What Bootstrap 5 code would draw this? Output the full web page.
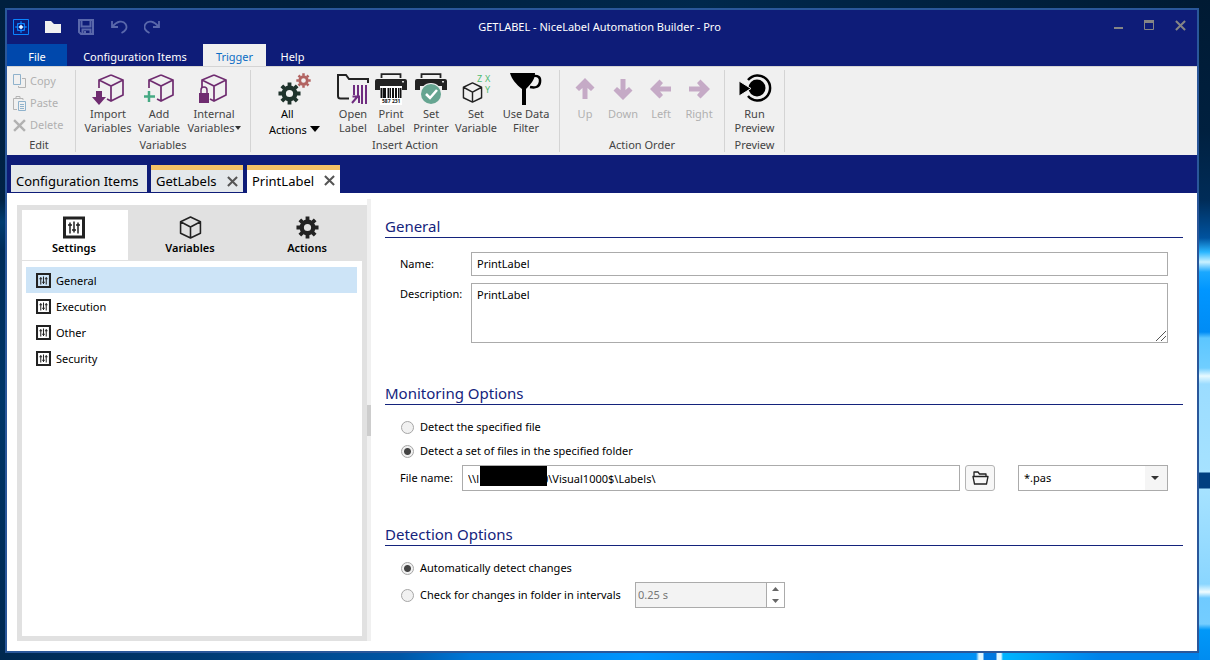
<!DOCTYPE html>
<html lang="en">
<head>
<meta charset="utf-8">
<meta name="viewport" content="width=device-width, initial-scale=1">
<title>GETLABEL - NiceLabel Automation Builder - Pro</title>
<link href="https://cdn.jsdelivr.net/npm/bootstrap@5.3.0/dist/css/bootstrap.min.css" rel="stylesheet">
<style>
:root{--navy:#0e1c78;--line:#ababab;--plum:#6f2c70}
body{font-family:"Noto Sans","Open Sans",sans-serif;font-size:11px;line-height:14px;color:#000;min-height:100vh;padding:8px 11px 7px 5px;
 background:
 linear-gradient(180deg,#001a33 0,#00203f 130px,#002c58 200px,#00539f 238px,#29b6ff 252px,#c9f1ff 262px,#1aa8ff 272px,#0096ff 290px,#008cf5 332px,#5cc6ff 338px,#70ceff 368px,#e8faff 376px,#9bdcff 384px,#a6e2ff 472px,#003f80 473px,#003f80 488px,#a6e2ff 489px,#8ad6ff 584px,#f0fcff 592px,#6fcaff 598px,#74cdff 624px,#0098f8 630px,#008cf0 660px) right top/11px 100% no-repeat,
 linear-gradient(90deg,#002850 0,#003a72 200px,#0056a6 400px,#0078d8 470px,#0096ff 640px,#0078e0 820px,#0090f5 976px,#dff6ff 979px,#dff6ff 983px,#0078e0 984px,#0078e0 996px,#dff6ff 997px,#dff6ff 1001px,#00b4ff 1003px,#0082ea 1100px) left bottom/100% 7px no-repeat,
 linear-gradient(90deg,#00203f 0,#001f3c 300px,#00284c 700px,#001a33 1210px) left top/100% 8px no-repeat,
 linear-gradient(180deg,#00203f 0,#002245 200px,#003c70 222px,#002c58 250px,#003668 400px,#002850 660px)}
button,input,select,textarea{font:inherit;color:inherit}
button{background:none;border:0;padding:0}
svg{display:block;flex:none}
.app-window{border:2px solid #2a579a;background:#fff;min-height:calc(100vh - 15px)}
.title-bar{background:var(--navy);color:#fff;height:34px;display:grid;grid-template-columns:1fr auto 1fr;align-items:center;padding:0 11px 0 6px}
.menu-bar{background:var(--navy);height:22px}
.menu-bar button{color:#fff;padding-top:4px;height:22px}
.menu-bar .file-tab{background:#0048ac;width:60px}
.menu-bar .wide-tab{width:136px}
.menu-bar .on-tab{background:#f0f0f0;color:#0b6cc4;width:63px}
.menu-bar .help-tab{width:53px}
.ribbon{background:#f0f0f0;height:89px;color:#444;padding-top:3px;border-top:1px solid #d4d4d4}
.rb-group{height:82px;border-right:1px solid #d4d4d4;padding-top:3px}
.rb-grid{display:grid;height:65px;align-items:start}
.rb-grid button{display:flex;flex-direction:column;align-items:center;line-height:14px;white-space:nowrap}
.rb-grid svg{margin-bottom:2px}
.rb-title{text-align:center;line-height:14px}
.g-edit{width:69px;padding-top:0}.g-vars{width:175px}.g-ins{width:309px}.g-ord{width:165px}.g-prev{width:60px}
.g-edit .rb-title{padding-right:4px}
.g-vars .rb-grid{grid-template-columns:52px 50px 60px;padding-left:6px}
.g-ins .rb-grid{grid-template-columns:69px 38px 38px 42px 48px 52px;padding-left:14px}
.g-ord .rb-grid{grid-template-columns:repeat(4,38px);padding-left:6px}
.g-prev .rb-grid{justify-content:center}
.rb-grid button:disabled,.edit-list button:disabled{color:#b1b1b1}
.edit-list{height:68px;padding-left:6px}
.edit-list button{display:flex;align-items:center;gap:4px;height:22px}
.caret{display:inline-block;border:3px solid transparent;border-top:4px solid #333;border-bottom:0;vertical-align:2px}
.caret-lg{border-width:5px;border-top:6px solid #000;border-bottom:0}
.doc-bar{background:var(--navy);height:38px;padding:10px 4px 0;gap:4px}
.doc-tab{height:27px;background:#e4e8eb;font-size:13px;padding:5px 5px 0;display:flex;align-items:center;justify-content:space-between;width:92px;border-top:0}
.doc-tab.first{width:136px}
.doc-tab.marked{border-top:5px solid #f4c266;padding-top:0}
.doc-tab.open{background:#fff;height:28px;width:93px;padding-bottom:2px}
.side{width:350px;background:#e1e1e1;padding:5px;margin:12px 0 10px 10px}
.side-tabs{height:51px;display:grid;grid-template-columns:106px 126px 108px}
.side-tabs button{display:flex;flex-direction:column;align-items:center;padding:6px 2px 0 0;gap:2px;font-weight:600;height:50px}
.side-tabs .on{background:#fff}
.side-list{background:#fff;flex:1;padding:6px 5px 6px 4px}
.side-list a{display:flex;align-items:center;height:26px;padding:1px 0 0 10px;gap:5px;color:#000;text-decoration:none}
.side-list .on{background:#cde4f7}
.grip{width:4px;background:#f0f0f0;margin:6px 0 10px}
.grip i{display:block;width:4px;height:31px;background:#cdcdcd}
.pane{padding:23px 14px 20px}
.pane h2{font-size:15px;font-weight:400;line-height:20px;color:#14237c;border-bottom:1px solid #14237c;padding-bottom:1px;margin:0}
.fields{padding:10px 15px 0}
.fields.general{padding:14px 15px 40px}
.fields.monitor{padding-bottom:33px}
.box{border:1px solid var(--line);border-radius:0;background:#fff;padding:0 5px;outline:0;min-width:0;display:block}
.box.h24{height:24px;padding-bottom:2px}
textarea.box{height:60px;padding:4px 5px;resize:none}
.name-col{width:71px}
.file-col{width:62px}
.desc-row{margin-top:7px}
.row-gap{margin-top:2px}
.interval{width:235px}
.sizer{right:2px;bottom:2px}
.radio-row{height:24px;display:flex;align-items:center}
.radio-row label{padding-left:5px}
input[type=radio]{appearance:none;width:13px;height:13px;border:1px solid #a6a6a6;border-radius:50%;background:#f1f1f1;margin:0 1px}
input[type=radio]:checked{background:radial-gradient(circle,#444 0 3px,#f1f1f1 4px)}
.h26{height:26px}
.redact{position:absolute;left:18px;top:1px;width:67px;height:20px;background:#000}
.pick{width:30px;height:26px;border:1px solid #b4b4b4;border-radius:3px;background:#f7f7f7;display:grid;place-items:center;margin:0 23px 0 5px}
.mask{width:150px;appearance:none;background:url("data:image/svg+xml,%3Csvg xmlns='http://www.w3.org/2000/svg' width='22' height='24'%3E%3Cpath fill='%23f5f5f5' d='M0 0h22v24H0z'/%3E%3Cpath fill='%23333' d='M6 10h8l-4 4z'/%3E%3C/svg%3E") right center no-repeat}
.spin{width:150px;border:1px solid var(--line)}
.spin input{width:131px;border:0;border-right:1px solid var(--line);background:#f3f3f3;color:#777;padding:0 2px}
.spin button{height:12px;width:17px;display:grid;place-items:center}
</style>
</head>
<body>
<svg width="0" height="0" class="position-absolute" aria-hidden="true">
 <symbol id="cube" viewBox="0 0 26 28"><path d="M13 1 25 6v15l-12 6-4-2M1 14V6L13 1M1 6l12 6 12-6M13 12v15" fill="none" stroke="currentColor" stroke-width="1.700"/></symbol>
 <symbol id="box" viewBox="0 0 22 22"><path d="M11 1 20.500 5.500v11L11 21l-9.500-4.500v-11zM1.500 5.500 11 10.500l9.500-5M11 10.500V21" fill="none" stroke="currentColor" stroke-width="1.500" stroke-linejoin="round"/></symbol>
 <symbol id="gear" viewBox="-12 -12 24 24"><circle r="6" fill="none" stroke="currentColor" stroke-width="4.500"/><path d="M0-7.500V-11.500M0 7.500V11.500M-7.500 0H-11.500M7.500 0H11.500M5.300-5.300 8-8M-5.300-5.300-8-8M5.300 5.300 8 8M-5.300 5.300-8 8" stroke="currentColor" stroke-width="4"/></symbol>
 <symbol id="sliders" viewBox="0 0 22 22"><path d="M1.500 1.500h19v19h-19z" fill="none" stroke="currentColor" stroke-width="3"/><path d="M7 6v11M11 5v11M15 6v11M5 8.500h4M9 13.500h4M13 8.500h4" fill="none" stroke="currentColor" stroke-width="1.500"/></symbol>
 <symbol id="arrow" viewBox="0 0 20 22"><path d="M10 0 19.500 9.500 16 13l-3.500-3V21h-5V10L4 13 .5 9.500z" fill="currentColor"/></symbol>
 <symbol id="printer" viewBox="0 0 32 32"><path d="M6.500 5V1.200h19V5" fill="none" stroke="#222" stroke-width="1.800"/><path d="M0 17V8q0-2 2-2h28q2 0 2 2v9h-5v-4H5v4z" fill="#222"/><path d="M27 8h2v1.500h-2z" fill="#ddd"/></symbol>
 <symbol id="cross" viewBox="0 0 12 12"><path d="m1 1 10 10M11 1 1 11" fill="none" stroke="currentColor" stroke-width="2.200"/></symbol>
</svg>

<div class="app-window d-flex flex-column">
 <header class="title-bar">
  <div class="d-flex align-items-center">
   <button class="me-3" aria-label="Application menu"><svg width="16" height="16" viewBox="0 0 16 16" fill="none" stroke="#0a84ff"><path d="M.5.5h15v15H.5z"/><path d="M4.500 4.500h7v7h-7zM8 2v12M2 8h12"/><circle cx="8" cy="8" r="4"/><circle cx="8" cy="8" r="1.500" fill="#fff" stroke="#bfe0ff"/></svg></button>
   <button class="me-3" aria-label="Open"><svg width="17" height="12" viewBox="0 0 17 12"><path d="M0 0h6l3 3h7v9H0z" fill="#f0f0f0"/></svg></button>
   <button class="me-3" aria-label="Save"><svg width="17" height="16" viewBox="0 0 17 16" fill="none" stroke="#5a68ab" stroke-width="2"><path d="M1 1h14v14H3l-2-2zM3.500 1v6.500h9V1M4.500 15v-4.500h8V15"/><path d="M7 12v3"/></svg></button>
   <button class="me-3" aria-label="Undo"><svg width="17" height="14" viewBox="0 0 17 14" fill="none" stroke="#5a68ab" stroke-width="1.800"><path d="M1 1v6h6M1.500 6.500C6 1 12 0 14.500 4s0 7-4 9"/></svg></button>
   <button aria-label="Redo"><svg width="17" height="14" viewBox="0 0 17 14" fill="none" stroke="#5a68ab" stroke-width="1.800"><path d="M15 1v6h-6M14.500 6.500C10 1 4 0 1.500 4s0 7 4 9"/></svg></button>
  </div>
  <div>GETLABEL - NiceLabel Automation Builder - Pro</div>
  <div class="d-flex justify-content-end pb-1">
   <button aria-label="Minimize"><svg width="10" height="10"><path d="M0 7h9v2H0z" fill="#858585"/></svg></button>
   <button class="mx-3 px-1" aria-label="Maximize"><svg width="11" height="10"><path d="M.5.500h9v9h-9z" fill="none" stroke="#858585"/><path d="M0 0h10v3H0z" fill="#858585"/></svg></button>
   <button aria-label="Close"><svg width="11" height="11" color="#858585"><use href="#cross"/></svg></button>
  </div>
 </header>
 <nav class="menu-bar d-flex">
  <button class="file-tab">File</button><button class="wide-tab">Configuration Items</button><button class="on-tab">Trigger</button><button class="help-tab">Help</button>
 </nav>

 <div class="ribbon d-flex">
  <section class="rb-group g-edit">
   <div class="edit-list">
    <button disabled><svg width="13" height="15" viewBox="0 0 13 15" fill="none"><path d="M.5.500h7v10h-7z" stroke="#8fb2cc"/><path d="M9 4.500h3.500v9h-7V12" stroke="#b4b4b4"/></svg>Copy</button>
    <button disabled><svg width="13" height="15" viewBox="0 0 13 15" fill="none"><path d="M4 13.500H.5v-11H10V4M3 2.500v-2h4v2" stroke="#b4b4b4"/><path d="M5.500 5.500h7v9h-7zM7 8.500h4M7 10.500h4M7 12.500h4" stroke="#8fb2cc"/></svg>Paste</button>
    <button disabled><svg width="13" height="13"><use href="#cross"/></svg>Delete</button>
   </div>
   <div class="rb-title">Edit</div>
  </section>
  <section class="rb-group g-vars">
   <div class="rb-grid">
    <button><svg width="32" height="32" viewBox="0 0 32 32" color="#6f2c70"><use href="#cube" x="6" y="1" width="26" height="28"/><path d="M4 18h6v6h4l-7 8-7-8h4z" fill="#6f2c70"/></svg>Import<br>Variables</button>
    <button><svg width="32" height="32" viewBox="0 0 32 32" color="#6f2c70"><use href="#cube" x="5" y="1" width="26" height="28"/><path d="M6 18v11M1 23.500h11" stroke="#45a983" stroke-width="2.500"/></svg>Add<br>Variable</button>
    <button><svg width="32" height="32" viewBox="0 0 32 32" color="#6f2c70"><use href="#cube" x="3" y="1" width="26" height="28"/><path d="M1 20h10v10H1z" fill="#6f2c70"/><path d="M3 20v-3q0-3 3-3t3 3v3" fill="none" stroke="#6f2c70" stroke-width="1.500"/></svg>Internal<br><span>Variables<i class="caret"></i></span></button>
   </div>
   <div class="rb-title">Variables</div>
  </section>
  <section class="rb-group g-ins">
   <div class="rb-grid">
    <button class="text-black align-items-start"><svg width="48" height="32" viewBox="0 0 48 32"><use href="#gear" x="13" y="9" width="23" height="23" color="#1f332c"/><use href="#gear" x="31" y="0" width="15" height="15" color="#b26462"/></svg><span class="ps-3">All</span><span class="ps-1 row-gap">Actions <i class="caret caret-lg"></i></span></button>
    <button><svg width="32" height="32" viewBox="0 0 32 32"><path d="M12 25.500H3.500Q1 25.500 1 23V2h8l3 4h19v4" fill="none" stroke="#222" stroke-width="2"/><path d="M17 12v10M21 12v13M25 12v19M29 12v19M15 30l6-7M15.500 23.500H22V30" fill="none" stroke="#6f2c80" stroke-width="2"/></svg>Open<br>Label</button>
    <button><svg width="32" height="32" viewBox="0 0 32 32"><use href="#printer" width="32" height="32"/><path d="M5 13h22v19H5z" fill="#fff"/><path d="M6.500 15v10M10 15v10M13.500 15v10M18 15v10M21 15v10M25.500 15v10" stroke="#111" stroke-width="2"/><path d="M8.500 15v10M15.500 15v10M23.500 15v10" stroke="#111"/><text x="7" y="30" font-size="5" font-weight="700" fill="#111">587 231</text></svg>Print<br>Label</button>
    <button><svg width="32" height="32" viewBox="0 0 32 32"><use href="#printer" width="32" height="32"/><circle cx="16" cy="21" r="11" fill="#f0f0f0"/><circle cx="16" cy="21" r="10" fill="#66a591"/><path d="m11 21 4 4 7-8" fill="none" stroke="#fff" stroke-width="2.500"/></svg>Set<br>Printer</button>
    <button><svg width="32" height="32" viewBox="0 0 32 32"><use href="#box" x="1" y="9" width="23" height="21" color="#222"/><g font-size="9" fill="#4fbb70"><text x="17" y="9">Z</text><text x="25" y="9">X</text><text x="25" y="20">Y</text></g></svg>Set<br>Variable</button>
    <button><svg width="32" height="32" viewBox="0 0 32 32"><path d="M0 0h25c0 5-2 9-9 16v16h-4V16C6 11 2 7 0 0z"/><path d="M23 3q8-1 7 6t-10 5" fill="none" stroke="#000" stroke-width="2.500"/></svg>Use Data<br>Filter</button>
   </div>
   <div class="rb-title">Insert Action</div>
  </section>
  <section class="rb-group g-ord">
   <div class="rb-grid">
    <button disabled><svg width="32" height="32" viewBox="0 0 32 32" color="#c5aac6"><use href="#arrow" x="6" y="5" width="20" height="22"/></svg>Up</button>
    <button disabled><svg width="32" height="32" viewBox="0 0 32 32" color="#c5aac6"><use href="#arrow" x="6" y="5" width="20" height="22" transform="rotate(180 16 16)"/></svg>Down</button>
    <button disabled><svg width="32" height="32" viewBox="0 0 32 32" color="#c5aac6"><use href="#arrow" x="6" y="5" width="20" height="22" transform="rotate(-90 16 16)"/></svg>Left</button>
    <button disabled><svg width="32" height="32" viewBox="0 0 32 32" color="#c5aac6"><use href="#arrow" x="6" y="5" width="20" height="22" transform="rotate(90 16 16)"/></svg>Right</button>
   </div>
   <div class="rb-title">Action Order</div>
  </section>
  <section class="rb-group g-prev">
   <div class="rb-grid"><button><svg width="34" height="32" viewBox="0 0 34 32"><path d="M10 7a12.500 12.500 0 1 1 0 16" fill="none" stroke="#000" stroke-width="2.500"/><circle cx="19" cy="15" r="8.500"/><path d="M1 8v15l12-7.500z" stroke="#f0f0f0"/></svg>Run<br>Preview</button></div>
   <div class="rb-title">Preview</div>
  </section>
 </div>

 <div class="doc-bar d-flex">
  <button class="doc-tab first">Configuration Items</button>
  <button class="doc-tab marked">GetLabels<svg width="11" height="11" color="#555"><use href="#cross"/></svg></button>
  <button class="doc-tab marked open">PrintLabel<svg width="11" height="11" color="#555"><use href="#cross"/></svg></button>
 </div>

 <main class="d-flex flex-grow-1">
  <aside class="side d-flex flex-column flex-shrink-0">
   <div class="side-tabs">
    <button class="on"><svg width="22" height="23" color="#222"><use href="#sliders"/></svg>Settings</button>
    <button><svg width="23" height="23" color="#222"><use href="#box"/></svg>Variables</button>
    <button><svg width="23" height="23" color="#222"><use href="#gear"/></svg>Actions</button>
   </div>
   <nav class="side-list">
    <a href="#general" class="on"><svg width="15" height="15" color="#222"><use href="#sliders"/></svg>General</a>
    <a href="#execution"><svg width="15" height="15" color="#222"><use href="#sliders"/></svg>Execution</a>
    <a href="#other"><svg width="15" height="15" color="#222"><use href="#sliders"/></svg>Other</a>
    <a href="#security"><svg width="15" height="15" color="#222"><use href="#sliders"/></svg>Security</a>
   </nav>
  </aside>
  <div class="grip d-flex align-items-center"><i></i></div>
  <form class="pane flex-grow-1">
   <h2 id="general">General</h2>
   <div class="fields general">
    <div class="d-flex align-items-center"><label class="name-col" for="nm">Name:</label><input id="nm" class="box h24 flex-grow-1" value="PrintLabel"></div>
    <div class="d-flex desc-row"><label class="name-col pt-1" for="ds">Description:</label>
     <div class="position-relative flex-grow-1"><textarea id="ds" class="box w-100">PrintLabel</textarea>
      <svg class="position-absolute sizer" width="10" height="10" stroke="#555"><path d="M0 10 10 0M5 10l5-5"/></svg></div></div>
   </div>
   <h2>Monitoring Options</h2>
   <div class="fields monitor">
    <div class="radio-row"><input type="radio" name="mon" id="m1"><label for="m1">Detect the specified file</label></div>
    <div class="radio-row"><input type="radio" name="mon" id="m2" checked><label for="m2">Detect a set of files in the specified folder</label></div>
    <div class="d-flex align-items-center row-gap">
     <label for="fn" class="file-col">File name:</label>
     <div class="position-relative flex-grow-1"><input id="fn" class="box w-100 h26" value="\\l                      0\Visual1000$\Labels\"><span class="redact"></span></div>
     <button type="button" class="pick" aria-label="Browse"><svg width="17" height="14" viewBox="0 0 17 14" fill="none" stroke="#222" stroke-width="1.300"><path d="M2 5V1h4l1.500 2H14v2M1 5.500h15L14.500 13h-12z" stroke-linejoin="round"/></svg></button>
     <select class="box h26 mask" aria-label="File mask"><option>*.pas</option></select>
    </div>
   </div>
   <h2>Detection Options</h2>
   <div class="fields">
    <div class="radio-row"><input type="radio" name="det" id="d1" checked><label for="d1">Automatically detect changes</label></div>
    <div class="d-flex align-items-center row-gap">
     <div class="radio-row interval"><input type="radio" name="det" id="d2"><label for="d2">Check for changes in folder in intervals</label></div>
     <div class="spin d-flex h26"><input value="0.25 s" disabled aria-label="Interval">
      <div><button type="button" aria-label="Increase"><svg width="7" height="4"><path d="M0 4h7L3.500 0z" fill="#666"/></svg></button><button type="button" aria-label="Decrease"><svg width="7" height="4"><path d="M0 0h7L3.500 4z" fill="#666"/></svg></button></div></div>
    </div>
   </div>
  </form>
 </main>
</div>
<script src="https://cdn.jsdelivr.net/npm/bootstrap@5.3.0/dist/js/bootstrap.bundle.min.js"></script>
</body>
</html>
